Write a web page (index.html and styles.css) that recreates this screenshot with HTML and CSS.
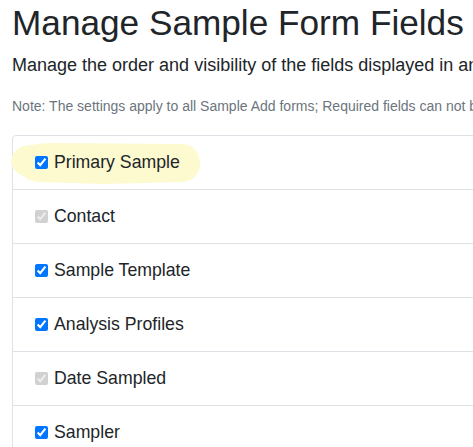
FILE: index.html
```html
<!DOCTYPE html>
<html lang="en">
<head>
<meta charset="utf-8">
<title>Manage Sample Form Fields</title>
<link rel="stylesheet" href="styles.css">
</head>
<body>
<div class="page">
  <h1 class="title">Manage Sample Form Fields</h1>
  <p class="lead">Manage the order and visibility of the fields displayed in analysis request forms.</p>
  <p class="note">Note: The settings apply to all Sample Add forms; Required fields can not be hidden.</p>
  <ul class="list">
    <li class="item item-highlight">
      <svg class="marker" width="192" height="43" viewBox="0 0 192 43" aria-hidden="true">
        <path d="M1,19 C2,10 8,5 15,4 C25,2 35,1 45,1 L172,2 C183,2 190,11 190,22 C190,32 182,40 172,40 L95,42 L28,40 C22,39 17,38 15,35 C8,32 1,27 1,19 Z" fill="#fdfad0"/>
      </svg>
      <label class="field"><input type="checkbox" checked>Primary Sample</label>
    </li>
    <li class="item"><label class="field"><input type="checkbox" checked disabled>Contact</label></li>
    <li class="item"><label class="field"><input type="checkbox" checked>Sample Template</label></li>
    <li class="item"><label class="field"><input type="checkbox" checked>Analysis Profiles</label></li>
    <li class="item"><label class="field"><input type="checkbox" checked disabled>Date Sampled</label></li>
    <li class="item"><label class="field"><input type="checkbox" checked>Sampler</label></li>
    <li class="item"><label class="field"><input type="checkbox" checked>Client Sample ID</label></li>
  </ul>
</div>
</body>
</html>
```
FILE: styles.css
```css
html, body {
  margin: 0;
  padding: 0;
  overflow: hidden;
  background: #fff;
}
body {
  font-family: "Liberation Sans", Arial, sans-serif;
  color: #212529;
}
.page {
  width: 900px;
  padding: 4px 12px 0 12px;
  white-space: nowrap;
}
.title {
  margin: 0;
  font-size: 35.2px;
  font-weight: 400;
  line-height: 1.1;
}
.lead {
  margin: 9px 0 0 0;
  font-size: 18px;
  line-height: 1.5;
}
.note {
  margin: 17px 0 0 0;
  font-size: 14px;
  line-height: 1.5;
  color: #6c757d;
}
.list {
  list-style: none;
  margin: 18px 0 0 0;
  padding: 0;
  border: 1px solid #dee2e6;
  border-radius: 4px;
}
.item {
  position: relative;
  padding: 13px 22px;
  font-size: 17.7px;
  line-height: 27px;
  border-top: 1px solid #dee2e6;
}
.item:first-child {
  border-top: 0;
}
.marker {
  position: absolute;
  left: -3px;
  top: 6px;
}
.field {
  position: relative;
  display: flex;
  align-items: center;
  gap: 6px;
}
.field input {
  margin: 0;
  width: 13px;
  height: 13px;
}
```
